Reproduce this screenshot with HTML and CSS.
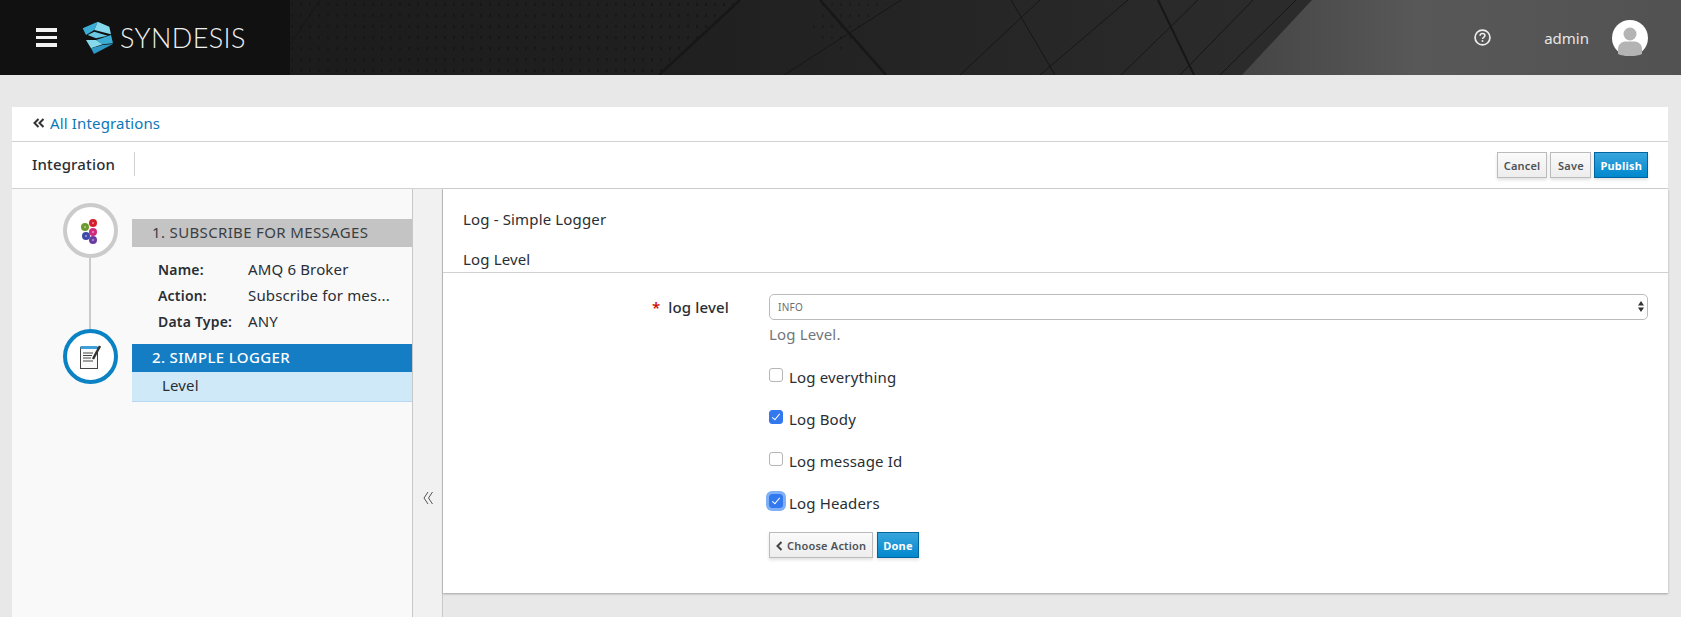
FILE: index.html
```html
<!DOCTYPE html>
<html lang="en">
<head>
    <meta charset="UTF-8">
    <meta name="viewport" content="width=device-width, initial-scale=1.0">
    <title>Syndesis</title>
    <link rel="stylesheet" href="styles.css">
</head>
<body>
    <header class="topbar">
        <svg class="topbar-art" viewBox="0 0 1681 75" preserveAspectRatio="none" aria-hidden="true">
            <defs>
                <pattern id="dots" width="9" height="11" patternUnits="userSpaceOnUse">
                    <rect x="3" y="3" width="2" height="3" fill="#151515"/>
                </pattern>
                <linearGradient id="wedge" x1="0" x2="1" y1="0" y2="0">
                    <stop offset="0" stop-color="#454545"/>
                    <stop offset="0.4" stop-color="#585858"/>
                    <stop offset="1" stop-color="#525252"/>
                </linearGradient>
            </defs>
            <polygon points="290,0 740,0 659,75 290,75" fill="url(#dots)" opacity="0.75"/>
            <polygon points="820,0 890,0 840,50 810,30" fill="url(#dots)" opacity="0.5"/>
            <polygon points="1312,0 1681,0 1681,75 1242,75" fill="url(#wedge)"/>
            <g stroke="#171717" fill="none">
                <path d="M740 0 659 75" stroke-width="2.500"/>
                <path d="M820 0 886 75" stroke-width="2.500"/>
                <path d="M901 0 784 75"/>
                <path d="M1011 0 1055 75"/>
                <path d="M1040 0 960 75"/>
                <path d="M1128 0 1040 75"/>
                <path d="M1158 0 1194 75" stroke-width="2"/>
                <path d="M1198 0 1121 75"/>
                <path d="M1253 0 1180 75"/>
                <path d="M1296 0 1220 75"/>
                <path d="M320 0 290 45"/>
            </g>
        </svg>
        <div class="brand">
            <div class="hamburger"><span></span><span></span><span></span></div>
            <svg class="logo" viewBox="0 0 31 33" aria-hidden="true">
                <polygon points="0.700,7.300 15.700,0.700 12.300,9 4,14" fill="#3bacd4"/>
                <polygon points="15.700,0.700 27.300,5.700 29,13.300 12.300,9" fill="#86d9ec"/>
                <polygon points="5.700,14 12.300,10.700 25.700,14.700 14,17.300" fill="#6cc9e2"/>
                <polygon points="14,19 29,14 31,22.300 20.700,23.300" fill="#3bacd4"/>
                <polygon points="4,19 14,19 20.700,23.300 9,27.300" fill="#86d9ec"/>
                <polygon points="9,27.300 20.700,24 31,23 12,33" fill="#3098c4"/>
            </svg>
            <span class="brand-name">SYNDESIS</span>
        </div>
        <div class="topbar-right">
            <svg class="help" viewBox="0 0 16 16" aria-hidden="true">
                <circle cx="8" cy="8" r="7" fill="none" stroke="#eee" stroke-width="1.600"/>
                <path d="M5.700 6.300C5.800 4.900 6.900 4.200 8 4.200c1.300 0 2.300.8 2.300 2 0 1.600-2.300 1.600-2.300 3.200" fill="none" stroke="#eee" stroke-width="1.500"/>
                <rect x="7.200" y="10.500" width="1.600" height="1.600" fill="#eee"/>
            </svg>
            <span class="user-name">admin</span>
            <svg class="avatar" viewBox="0 0 36 36" aria-hidden="true">
                <circle cx="18" cy="18" r="18" fill="#fff"/>
                <circle cx="18" cy="14" r="6.500" fill="#b4b4b4"/>
                <path d="M6 34V29c0-5 4-7.500 8-7.500h8c4 0 8 2.500 8 7.500v5c-3 1.500-7 2-12 2s-9-.5-12-2z" fill="#b4b4b4"/>
            </svg>
        </div>
    </header>

    <div class="content">
        <div class="breadcrumb">
            <svg class="crumb-icon" viewBox="0 0 12 10" aria-hidden="true">
                <path d="M5.500 1 1.500 5l4 4M10.500 1l-4 4 4 4" fill="none" stroke="#333" stroke-width="2"/>
            </svg>
            <a href="#" class="crumb-link">All Integrations</a>
        </div>

        <div class="toolbar">
            <span class="toolbar-title">Integration</span>
            <div class="toolbar-actions">
                <button class="btn">Cancel</button>
                <button class="btn">Save</button>
                <button class="btn btn-primary">Publish</button>
            </div>
        </div>

        <div class="editor">
            <aside class="sidebar">
                <div class="rail">
                    <div class="step-icon">
                        <svg viewBox="0 0 24 26" width="24" height="26" aria-hidden="true">
                            <circle cx="15" cy="5" r="4" fill="#d4202c"/>
                            <circle cx="7" cy="9" r="4" fill="#6d9a2c"/>
                            <circle cx="15" cy="14" r="4" fill="#cf2a7c"/>
                            <circle cx="8" cy="18" r="4" fill="#3f49a8"/>
                            <circle cx="15" cy="22" r="4" fill="#6b3ba4"/>
                            <g fill="#fff" opacity="0.5">
                                <circle cx="15" cy="5" r="1"/>
                                <circle cx="7" cy="9" r="1"/>
                                <circle cx="15" cy="14" r="1"/>
                                <circle cx="8" cy="18" r="1"/>
                                <circle cx="15" cy="22" r="1"/>
                            </g>
                        </svg>
                    </div>
                    <div class="rail-line"></div>
                    <div class="step-icon step-icon-active">
                        <svg viewBox="0 0 22 26" width="22" height="26" aria-hidden="true">
                            <rect x="1.500" y="3.500" width="17" height="21" fill="#fafafa" stroke="#444" stroke-width="1"/>
                            <rect x="1.500" y="2" width="17" height="3" fill="#3f9fd8"/>
                            <path d="M4 9h10M4 11.500h9M4 14h8M4 17h10" stroke="#444" stroke-width="1"/>
                            <path d="M21 2 14 15" stroke="#333" stroke-width="2.500"/>
                        </svg>
                    </div>
                </div>
                <div class="steps">
                    <div class="step-title">1. SUBSCRIBE FOR MESSAGES</div>
                    <dl class="step-details">
                        <dt>Name:</dt><dd>AMQ 6 Broker</dd>
                        <dt>Action:</dt><dd>Subscribe for mes...</dd>
                        <dt>Data Type:</dt><dd>ANY</dd>
                    </dl>
                    <div class="step-title step-title-active">2. SIMPLE LOGGER</div>
                    <div class="step-sub">Level</div>
                </div>
            </aside>

            <div class="collapse-bar">
                <svg viewBox="0 0 10 14" width="10" height="14" aria-hidden="true">
                    <path d="M5 1 1 7l4 6M9.500 1l-4 6 4 6" fill="none" stroke="#555" stroke-width="1"/>
                </svg>
            </div>

            <main class="panel">
                <div class="panel-head">
                    <div class="panel-title">Log - Simple Logger</div>
                    <div class="panel-sub">Log Level</div>
                </div>
                <form class="panel-form">
                    <label class="field-label"><span class="required">*</span> log level</label>
                    <div class="field-body">
                        <div class="select-wrap">
                            <select class="select">
                                <option>INFO</option>
                            </select>
                            <svg class="select-arrows" viewBox="0 0 6 11" aria-hidden="true">
                                <path d="M3 0 6 4.500H0zM3 11 0 6.500h6z" fill="#333"/>
                            </svg>
                        </div>
                        <div class="help-text">Log Level.</div>
                        <label class="check"><input type="checkbox"> Log everything</label>
                        <label class="check"><input type="checkbox" checked> Log Body</label>
                        <label class="check"><input type="checkbox"> Log message Id</label>
                        <label class="check"><input type="checkbox" class="focused" checked> Log Headers</label>
                        <div class="form-actions">
                            <button type="button" class="btn">
                                <svg viewBox="0 0 7 10" width="7" height="10" aria-hidden="true">
                                    <path d="M5.500 1 1.500 5l4 4" fill="none" stroke="#444" stroke-width="2"/>
                                </svg>
                                Choose Action
                            </button>
                            <button type="button" class="btn btn-primary">Done</button>
                        </div>
                    </div>
                </form>
            </main>
        </div>
    </div>
</body>
</html>
```
FILE: styles.css
```css
html, body {
    height: 100%;
}
body {
    margin: 0;
    background: #e8e8e8;
    color: #292e34;
    font-family: "Noto Sans", "Open Sans", sans-serif;
    font-size: 15px;
    letter-spacing: 0.15px;
    overflow: hidden;
}

/* top bar */
.topbar {
    position: relative;
    display: flex;
    justify-content: space-between;
    align-items: center;
    height: 75px;
    background: linear-gradient(90deg, #1c1c1c 290px, #202020 700px, #2b2b2b 1240px);
}
.topbar-art {
    position: absolute;
    top: 0;
    left: 0;
    width: 100%;
    height: 100%;
}
.brand {
    position: relative;
    display: flex;
    align-items: center;
    width: 254px;
    height: 75px;
    padding-left: 36px;
    background: #111;
}
.hamburger {
    display: flex;
    flex-direction: column;
    gap: 4px;
    width: 21px;
    margin-right: 25px;
}
.hamburger span {
    height: 3.500px;
    background: #f2f2f2;
}
.logo {
    width: 31px;
    height: 33px;
    margin-right: 7px;
}
.brand-name {
    color: #f0f0f0;
    font-family: Lato, sans-serif;
    font-weight: 300;
    font-size: 27px;
    letter-spacing: 0.4px;
}
.topbar-right {
    position: relative;
    display: flex;
    align-items: center;
    padding-right: 33px;
}
.help {
    width: 17px;
    height: 17px;
    margin-right: 53px;
}
.user-name {
    color: #e6e6e6;
    font-size: 15px;
    letter-spacing: 0;
    margin-right: 23px;
}
.avatar {
    width: 36px;
    height: 36px;
}

/* page body */
.content {
    padding: 32px 13px 0 12px;
}
.breadcrumb {
    display: flex;
    align-items: center;
    height: 32px;
    padding: 0 0 2px 21px;
    background: #fff;
    border-bottom: 1px solid #d1d1d1;
}
.crumb-icon {
    width: 12px;
    height: 10px;
    margin-right: 5px;
}
.crumb-link {
    color: #0c77b8;
    text-decoration: none;
}
.toolbar {
    display: flex;
    justify-content: space-between;
    align-items: center;
    height: 46px;
    padding: 0 20px;
    background: #fff;
    border-bottom: 1px solid #d1d1d1;
}
.toolbar-title {
    margin-bottom: 2px;
    padding: 2px 19px 2px 0;
    border-right: 1px solid #d1d1d1;
    font-weight: 500;
}
.toolbar-actions {
    display: flex;
    gap: 3px;
}
.btn {
    min-width: 41px;
    height: 26px;
    padding: 0 6px;
    background: linear-gradient(#fafafa, #ededed);
    border: 1px solid #bbb;
    box-shadow: 0 2px 3px rgba(0, 0, 0, 0.12);
    color: #4d5258;
    font-family: inherit;
    font-size: 11px;
    font-weight: 600;
    letter-spacing: 0.2px;
}
.btn-primary {
    padding: 0 5px;
    background: linear-gradient(#39a5dc, #0088ce);
    border-color: #00659c;
    color: #fff;
    font-weight: 700;
}

/* left steps */
.editor {
    display: flex;
    height: 428px;
}
.sidebar {
    display: flex;
    width: 400px;
    background: #f9f9f9;
    border-right: 1px solid #c8c8c8;
}
.rail {
    display: flex;
    flex-direction: column;
    align-items: center;
    flex: none;
    width: 120px;
    padding: 14px 0 0 36px;
    box-sizing: border-box;
}
.step-icon {
    display: flex;
    justify-content: center;
    align-items: center;
    flex: none;
    width: 47px;
    height: 47px;
    background: #fff;
    border: 4px solid #cbcbcb;
    border-radius: 50%;
}
.step-icon-active {
    border-color: #0a82c4;
}
.rail-line {
    width: 2px;
    height: 71px;
    background: #cbcbcb;
}
.steps {
    flex: 1;
    padding-top: 30px;
}
.step-title {
    height: 28px;
    padding-left: 20px;
    background: #c4c4c4;
    color: #3a3f44;
    letter-spacing: 0.35px;
    line-height: 27px;
}
.step-title-active {
    background: #147dc4;
    color: #fff;
    font-weight: 500;
}
.step-sub {
    height: 29px;
    padding-left: 30px;
    background: #cfe9f9;
    border-bottom: 1px solid #b5daf2;
    line-height: 26px;
}
.step-details {
    display: grid;
    grid-template-columns: 90px 1fr;
    grid-auto-rows: 26px;
    align-items: center;
    height: 97px;
    margin: 0;
    padding: 9px 0 0 26px;
    box-sizing: border-box;
}
.step-details dt {
    font-size: 14px;
    font-weight: 600;
    letter-spacing: 0.2px;
}
.step-details dd {
    margin: 0;
}

/* collapse strip */
.collapse-bar {
    display: flex;
    justify-content: center;
    align-items: center;
    width: 29px;
    padding-top: 190px;
    background: #f1f1f1;
    border-right: 1px solid #c8c8c8;
}

/* form panel */
.panel {
    flex: 1;
    align-self: flex-start;
    height: 404px;
    background: #fff;
    box-shadow: 0 1px 2px rgba(0, 0, 0, 0.3);
}
.panel-head {
    height: 84px;
    padding: 19px 0 0 20px;
    box-sizing: border-box;
    border-bottom: 1px solid #d1d1d1;
}
.panel-title {
    margin-bottom: 18px;
    line-height: 22px;
}
.panel-sub {
    line-height: 22px;
}
.panel-form {
    display: grid;
    grid-template-columns: 286px 1fr;
    padding: 21px 20px 0 0;
}
.field-label {
    padding-top: 3px;
    text-align: right;
    font-weight: 500;
}
.required {
    color: #c00;
    margin-right: 4px;
}
.field-body {
    margin-left: 40px;
}
.select-wrap {
    position: relative;
}
.select {
    display: block;
    width: 100%;
    height: 26px;
    padding: 0 8px;
    appearance: none;
    background: #fff;
    border: 1px solid #bbb;
    border-radius: 5px;
    color: #6a6e73;
    font-family: inherit;
    font-size: 10px;
    letter-spacing: 0.3px;
}
.select-arrows {
    position: absolute;
    top: 7px;
    right: 4px;
    width: 6px;
    height: 11px;
}
.help-text {
    margin: 3px 0 22px;
    color: #72767b;
    line-height: 22px;
}
.check {
    display: flex;
    align-items: center;
    gap: 6px;
    height: 20px;
    margin-bottom: 22px;
}
.check input {
    position: relative;
    flex: none;
    width: 14px;
    height: 14px;
    margin: 0 0 4px;
    appearance: none;
    background: #fff;
    border: 1px solid #b5b5b5;
    border-radius: 3px;
}
.check input:checked {
    background: #3478f0;
    border-color: #3478f0;
}
.check input:checked::after {
    content: "";
    position: absolute;
    top: 1px;
    left: 3.500px;
    width: 3px;
    height: 7px;
    border: solid #fff;
    border-width: 0 1.500px 1.500px 0;
    transform: rotate(40deg);
}
.check input.focused {
    box-shadow: 0 0 0 3px #7fb0f5;
}
.form-actions {
    display: flex;
    gap: 4px;
    margin-top: -3px;
}
.form-actions .btn svg {
    margin-right: 1px;
    vertical-align: -1px;
}
```
